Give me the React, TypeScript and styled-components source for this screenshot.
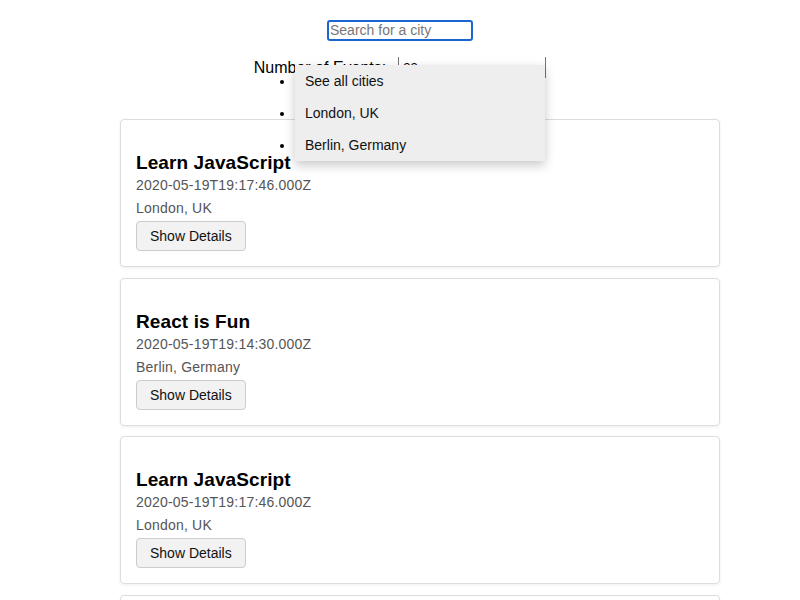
import React from "react";
import styled, { createGlobalStyle } from "styled-components";

const GlobalStyle = createGlobalStyle`
  html, body {
    margin: 0;
    padding: 0;
    background: #ffffff;
    overflow: hidden;
  }
  body {
    font-family: "Liberation Sans", Arial, sans-serif;
    color: #000;
  }
`;

const Page = styled.div`
  padding: 20px 80px 0;
`;

const Header = styled.div`
  position: relative;
  display: flex;
  flex-direction: column;
  align-items: center;
`;

const SearchInput = styled.input`
  box-sizing: border-box;
  width: 146px;
  height: 21px;
  padding: 0 2px 1px 1px;
  border: 2px solid #1766d1;
  border-radius: 3px;
  font-family: "Liberation Sans", Arial, sans-serif;
  font-size: 14px;
  color: #000;
  outline: none;
  caret-color: #000;
  &::placeholder {
    color: #767676;
  }
`;

const NumberRow = styled.div`
  display: flex;
  align-items: center;
  gap: 12px;
  margin-top: 16px;
`;

const NumberLabel = styled.label`
  font-size: 16px;
  line-height: 19px;
`;

const NumberInput = styled.input`
  box-sizing: border-box;
  width: 148px;
  height: 21px;
  padding: 1px 4px 0;
  border: 1px solid #767676;
  border-top-width: 0;
  border-radius: 0;
  font-family: "Liberation Sans", Arial, sans-serif;
  font-size: 13px;
  background: #fff;
`;

const Suggestions = styled.ul`
  position: absolute;
  left: 215px;
  top: 45px;
  width: 250px;
  margin: 0;
  padding: 0;
  list-style: disc outside;
  z-index: 2;
  box-shadow: 0 4px 10px rgba(0, 0, 0, 0.22);
`;

const Suggestion = styled.li`
  padding: 8px 10px;
  font-size: 14px;
  line-height: 16px;
  background: #eeeeee;
  color: #111;
  text-align: left;
  &::marker {
    color: #000;
  }
`;

const EventList = styled.ul`
  list-style: none;
  margin: 41px 0 0;
  padding: 0 0 0 40px;
  display: flex;
  flex-direction: column;
  gap: 10.5px;
`;

const Card = styled.li`
  padding: 0 15px 15px;
  border: 1px solid #dddddd;
  border-radius: 4px;
  box-shadow: 0 1px 3px rgba(0, 0, 0, 0.07);
  text-align: left;
`;

const Title = styled.h2`
  margin: 32px 0 0;
  font-size: 19px;
  line-height: 22px;
  letter-spacing: 0.1px;
  font-weight: bold;
  color: #000;
`;

const Meta = styled.p`
  margin: 0;
  font-size: 14px;
  line-height: 23px;
  letter-spacing: 0.2px;
  color: #555555;
`;

const DetailsButton = styled.button`
  box-sizing: border-box;
  margin-top: 1px;
  height: 30px;
  padding: 0 13px;
  border: 1px solid #cccccc;
  border-radius: 4px;
  background: #f2f2f2;
  font-family: "Liberation Sans", Arial, sans-serif;
  font-size: 14px;
  color: #111;
  cursor: pointer;
`;

type EventItem = { title: string; date: string; location: string };

const events: EventItem[] = [
  { title: "Learn JavaScript", date: "2020-05-19T19:17:46.000Z", location: "London, UK" },
  { title: "React is Fun", date: "2020-05-19T19:14:30.000Z", location: "Berlin, Germany" },
  { title: "Learn JavaScript", date: "2020-05-19T19:17:46.000Z", location: "London, UK" },
  { title: "React is Fun", date: "2020-05-19T19:14:30.000Z", location: "Berlin, Germany" },
];

const cities = ["See all cities", "London, UK", "Berlin, Germany"];

export default function App() {
  return (
    <>
      <GlobalStyle />
      <Page>
        <Header>
          <SearchInput type="text" placeholder="Search for a city" autoFocus />
          <NumberRow>
            <NumberLabel htmlFor="num">Number of Events:</NumberLabel>
            <NumberInput id="num" type="text" defaultValue="32" />
          </NumberRow>
          <Suggestions>
            {cities.map((c) => (
              <Suggestion key={c}>{c}</Suggestion>
            ))}
          </Suggestions>
        </Header>
        <EventList>
          {events.map((e, i) => (
            <Card key={i}>
              <Title>{e.title}</Title>
              <Meta>{e.date}</Meta>
              <Meta>{e.location}</Meta>
              <DetailsButton>Show Details</DetailsButton>
            </Card>
          ))}
        </EventList>
      </Page>
    </>
  );
}
